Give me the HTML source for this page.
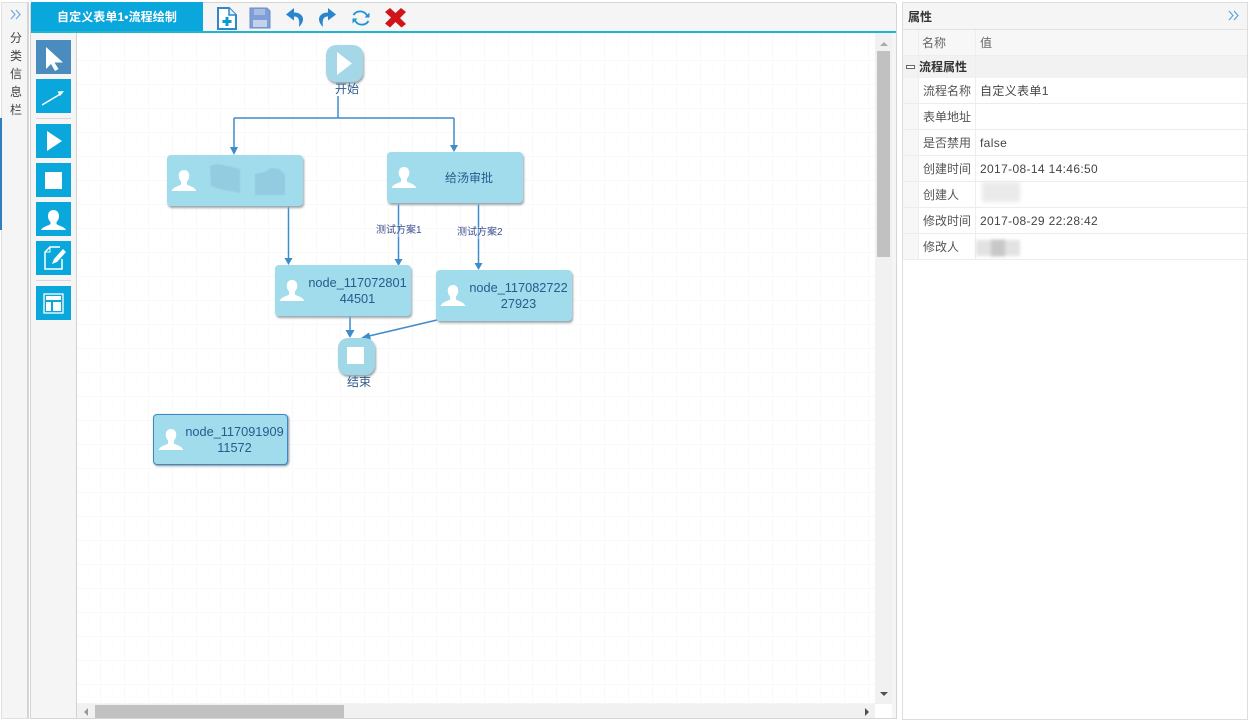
<!DOCTYPE html>
<html><head><meta charset="utf-8"><style>
html,body{margin:0;padding:0;background:#fff}
body{width:1250px;height:722px;overflow:hidden;position:relative;font-family:"Liberation Sans","Noto Sans CJK SC",sans-serif;font-size:12px;color:#333}
.a{position:absolute;box-sizing:border-box}
.btn{position:absolute;left:36px;width:35px;height:34px;background:#0aa7dc}
.btn svg{position:absolute;left:0;top:0}
.node{position:absolute;box-sizing:border-box;background:#a0dcec;border-radius:4px;box-shadow:1px 2px 2px #9aa6ac;color:#2a5a8c;font-size:12.75px;line-height:16px;text-align:center}
.node svg{position:absolute}
.node span{position:absolute;white-space:nowrap}
.row{position:absolute;left:903px;width:344px;height:26px;border-bottom:1px solid #ececec;box-sizing:border-box}
.row .k{position:absolute;left:20px;top:0;font-size:12px;line-height:27px;color:#555}
.row .v{position:absolute;left:77px;top:0;font-size:12px;line-height:27px;color:#444;letter-spacing:.35px}
.lab{position:absolute;font-size:10px;color:#3c4f8c;line-height:12px;white-space:nowrap}
</style></head><body>
<div class="a" style="left:1px;top:2px;width:28px;height:717px;background:#f5f5f5;border:1px solid #e0e0e0;border-right:2px solid #d4d4d4"></div>
<div class="a" style="left:0;top:118px;width:2px;height:112px;background:#2f7fc0"></div>
<svg class="a" style="left:10px;top:9px" width="12" height="12" fill="none" stroke="#6ea9dd" stroke-width="1.2"><path d="M1 1l4 4.500-4 4.500M6 1l4 4.500-4 4.500"/></svg>
<div class="a" style="left:9px;top:29px;width:14px;font-size:12px;line-height:18px;text-align:center;color:#444">分<br>类<br>信<br>息<br>栏</div>

<div class="a" style="left:30px;top:2px;width:867px;height:717px;background:#f5f5f5;border:1px solid #d5d5d5;border-radius:3px 3px 0 0"></div>
<div class="a" style="left:31px;top:2px;width:172px;height:29px;background:#0aa7dc;color:#fff;font-weight:bold;font-size:12px;line-height:30px;text-align:center;letter-spacing:.1px">自定义表单1•流程绘制</div>
<div class="a" style="left:31px;top:31px;width:865px;height:2px;background:#1fb3d4"></div>
<div class="a" style="left:76px;top:33px;width:1px;height:685px;background:#d6d0d0"></div>

<svg class="a" style="left:214px;top:5px" width="200" height="26">
<path d="M4 3h11l7 7v14H4z" fill="#fff" stroke="#2f86c8" stroke-width="2"/><path d="M15 3v7h7" fill="#dff0fa" stroke="#2f86c8" stroke-width="1.500"/><path d="M13 12v9M8.500 16.500h9" stroke="#0a9ad2" stroke-width="3"/>
<path d="M36 3h17l3 3v17H36z" fill="#7f9fd8" stroke="#6c8cc8"/><rect x="40" y="4" width="11" height="6" fill="#a8bce4"/><rect x="39" y="15" width="14" height="7" fill="#c4d2ee"/>
<path d="M80 3l-8 6.500 8 6v-4c4 0 6 2 5 10.500 4-4 5-8 3-11-2-2.500-4-3.500-8-3.500z" fill="#2a86cc"/>
<path d="M114 3l8 6.500-8 6v-4c-4 0-6 2-5 10.500-4-4-5-8-3-11 2-2.500 4-3.500 8-3.500z" fill="#2a86cc"/>
<path d="M139.500 10a7.800 7.800 0 0 1 13.500 .5M154.500 16a7.800 7.800 0 0 1-13.500-.5" fill="none" stroke="#1c94d2" stroke-width="1.800"/><path d="M155.500 7.500v5h-5zM138.500 18.500v-5h5z" fill="#1c94d2"/>
<path d="M171 7l5-4 5.500 5L187 3l5 4-6 6 6 6-4.500 3.500-6-5.500-5.500 5.500-5-4 6-6z" fill="#d0141a"/>
</svg>

<div class="btn" style="top:40px;background:#4a8cbe"><svg width="35" height="34"><path d="M10 7v22l5-5 4 7 3.500-2-4-6.500H27z" fill="#fff"/></svg></div>
<div class="btn" style="top:79px"><svg width="35" height="34"><path d="M6 26l20-12" stroke="#fff" stroke-width="1.500"/><path d="M28 12l-6.500 .5 2.500 4.500z" fill="#fff"/></svg></div>
<div class="a" style="left:36px;top:118px;width:35px;height:1px;background:#d8d8d8"></div>
<div class="btn" style="top:124px"><svg width="35" height="34"><path d="M11 7l15 10-15 10z" fill="#fff"/></svg></div>
<div class="btn" style="top:163px"><svg width="35" height="34"><rect x="9" y="9" width="17" height="17" fill="#fff"/></svg></div>
<div class="btn" style="top:202px"><svg width="35" height="34"><path d="M17.500 8c3.500 0 5.500 2.500 5.500 6 0 3-1.500 5-2.500 6v2c1 1.500 8 2.500 9.500 6H5c1.500-3.500 8.500-4.500 9.500-6v-2c-1-1-2.500-3-2.500-6 0-3.500 2-6 5.500-6z" fill="#fff"/></svg></div>
<div class="btn" style="top:241px"><svg width="35" height="34"><path d="M24 6H14L9 11v17h17V18" fill="none" stroke="#fff" stroke-width="1.500"/><path d="M14 6v5H9" fill="none" stroke="#fff" stroke-width="1"/><path d="M27 8l-9 10-2 5 5-2 9-10z" fill="#fff"/></svg></div>
<div class="a" style="left:36px;top:280px;width:35px;height:1px;background:#d8d8d8"></div>
<div class="btn" style="top:286px"><svg width="35" height="34"><rect x="8" y="8" width="19" height="19" fill="none" stroke="#fff" stroke-width="1.300"/><rect x="10" y="10" width="15" height="4" fill="#fff"/><rect x="10" y="16" width="5" height="9" fill="#fff"/><rect x="17" y="16" width="8" height="9" fill="#fff"/></svg></div>

<div class="a" style="left:77px;top:33px;width:798px;height:670px;background-color:#fff;background-image:linear-gradient(#f9f9f9 1px,transparent 1px),linear-gradient(90deg,#f9f9f9 1px,transparent 1px),linear-gradient(#fdfdfd 1px,transparent 1px),linear-gradient(90deg,#fdfdfd 1px,transparent 1px);background-size:24px 24px,24px 24px,12px 12px,12px 12px;background-position:-1px 3px"></div>

<div class="a" style="left:875px;top:33px;width:17px;height:671px;background:#f1f1f1"></div>
<div class="a" style="left:877px;top:51px;width:13px;height:206px;background:#c1c1c1"></div>
<svg class="a" style="left:879px;top:41px" width="10" height="6"><path d="M1 5l4-4 4 4z" fill="#aaa"/></svg>
<svg class="a" style="left:879px;top:691px" width="10" height="6"><path d="M1 1l4 4 4-4z" fill="#505050"/></svg>
<div class="a" style="left:77px;top:704px;width:798px;height:14px;background:#f1f1f1"></div>
<div class="a" style="left:875px;top:704px;width:17px;height:14px;background:#fff"></div>
<div class="a" style="left:95px;top:705px;width:249px;height:13px;background:#c1c1c1"></div>
<svg class="a" style="left:83px;top:707px" width="6" height="10"><path d="M5 1L1 5l4 4z" fill="#999"/></svg>
<svg class="a" style="left:864px;top:707px" width="6" height="10"><path d="M1 1l4 4-4 4z" fill="#505050"/></svg>

<svg class="a" style="left:0;top:0" width="900" height="500" fill="none" stroke="#3f8ccb" stroke-width="1.500">
<path d="M338 96v22M234 118h220M234 118v31M454 118v29M288.500 206v54M398.500 204v57M478.500 204v61M350 316v17M437 320l-68 16"/>
<g fill="#3f8ccb" stroke="none"><path d="M230 147h8l-4 8zM450 145h8l-4 7zM284.500 258h8l-4 7zM394.500 259h8l-4 7zM474.500 263h8l-4 7zM345.500 330h9l-4.500 8zM361 338l8-5.500 2 7z"/></g>
</svg>

<div class="a" style="left:326px;top:45px;width:37px;height:37px;border-radius:10px;background:#a4d8e8;box-shadow:1px 2px 2px #9aa4a8"></div>
<svg class="a" style="left:326px;top:45px" width="37" height="37"><path d="M11 7l15 11.500L11 30z" fill="#fff"/></svg>
<div class="a" style="left:326px;top:82px;width:42px;text-align:center;color:#2a5a8c;font-size:12px;line-height:14px">开始</div>

<div class="a" style="left:338px;top:338px;width:37px;height:37px;border-radius:10px;background:#a0d8e8;box-shadow:1px 2px 2px #9aa4a8"></div>
<div class="a" style="left:347px;top:347px;width:17px;height:17px;background:#fff"></div>
<div class="a" style="left:338px;top:375px;width:42px;text-align:center;color:#2a5a8c;font-size:12px;line-height:14px">结束</div>

<svg width="0" height="0" style="position:absolute"><defs><symbol id="u" viewBox="0 0 26 22"><path d="M13 0c3.500 0 5.500 2.500 5.500 6 0 3-1.500 5-2.500 6v3c1 1.500 8 2 10 7H0c2-5 9-5.500 10-7v-3c-1-1-2.500-3-2.500-6C7.500 2.500 9.500 0 13 0z" fill="#fff"/></symbol></defs></svg>

<div class="node" style="left:167px;top:155px;width:136px;height:51px">
<svg style="left:4px;top:15px" width="26" height="21"><use href="#u"/></svg>
<svg style="left:43px;top:9px;filter:blur(.6px)" width="76" height="32"><path d="M0 2l8-2 22 5v24l-20-4-9-3zM45 10l10-2 6-4 8 1 6 6v20H45z" fill="#93cbe0"/></svg>
</div>
<div class="node" style="left:387px;top:152px;width:136px;height:51px">
<svg style="left:4px;top:15px" width="26" height="21"><use href="#u"/></svg>
<span style="left:58px;top:18px;font-size:12px">给汤审批</span>
</div>
<div class="node" style="left:275px;top:265px;width:136px;height:51px">
<svg style="left:4px;top:15px" width="26" height="21"><use href="#u"/></svg>
<span style="left:33px;top:10px;width:99px">node_117072801<br>44501</span>
</div>
<div class="node" style="left:436px;top:270px;width:136px;height:51px">
<svg style="left:4px;top:15px" width="26" height="21"><use href="#u"/></svg>
<span style="left:33px;top:10px;width:99px">node_117082722<br>27923</span>
</div>
<div class="node" style="left:153px;top:414px;width:135px;height:51px;border:1px solid #3f86c4;box-shadow:1px 1px 2px #7a8a92">
<svg style="left:4px;top:14px" width="26" height="21"><use href="#u"/></svg>
<span style="left:31px;top:9px;width:99px">node_117091909<br>11572</span>
</div>

<div class="lab" style="left:376px;top:225px;background:rgba(255,255,255,.3)">测试方案1</div>
<div class="lab" style="left:457px;top:227px;background:rgba(255,255,255,.3)">测试方案2</div>

<div class="a" style="left:902px;top:2px;width:346px;height:718px;border:1px solid #ddd;background:#fff"></div>
<div class="a" style="left:903px;top:3px;width:344px;height:27px;background:#f5f5f5;border-bottom:1px solid #e2e2e2;font-weight:bold;font-size:12px;line-height:29px;padding-left:5px;color:#333">属性</div>
<svg class="a" style="left:1228px;top:10px" width="12" height="12" fill="none" stroke="#5aa4e0" stroke-width="1.200"><path d="M1 1l4 4.500-4 4.500M6 1l4 4.500-4 4.500"/></svg>
<div class="a" style="left:903px;top:30px;width:344px;height:26px;background:#f7f7f7;border-bottom:1px solid #eee"></div>
<div class="a" style="left:922px;top:30px;font-size:12px;line-height:26px;color:#666">名称</div>
<div class="a" style="left:980px;top:30px;font-size:12px;line-height:26px;color:#666">值</div>
<div class="a" style="left:903px;top:56px;width:344px;height:22px;background:#f2f2f2"></div>
<div class="a" style="left:906px;top:65px;width:9px;height:4px;border:1px solid #666;background:#fff"></div>
<div class="a" style="left:919px;top:56px;font-size:12px;font-weight:bold;line-height:22px;color:#333">流程属性</div>
<div class="a" style="left:903px;top:78px;width:15px;height:182px;background:#f7f7f7"></div>
<div class="row" style="top:78px"><span class="k">流程名称</span><span class="v">自定义表单1</span></div>
<div class="row" style="top:104px"><span class="k">表单地址</span></div>
<div class="row" style="top:130px"><span class="k">是否禁用</span><span class="v">false</span></div>
<div class="row" style="top:156px"><span class="k">创建时间</span><span class="v">2017-08-14 14:46:50</span></div>
<div class="row" style="top:182px"><span class="k">创建人</span></div>
<div class="row" style="top:208px"><span class="k">修改时间</span><span class="v">2017-08-29 22:28:42</span></div>
<div class="row" style="top:234px"><span class="k">修改人</span></div>
<div class="a" style="left:918px;top:30px;width:1px;height:230px;background:#eee"></div>
<div class="a" style="left:975px;top:30px;width:1px;height:230px;background:#eee"></div>
<div class="a" style="left:982px;top:182px;width:38px;height:20px;background:#eaeaea;filter:blur(2px)"></div>
<div class="a" style="left:976px;top:240px;width:44px;height:16px;background:#e2e2e2;filter:blur(1.500px)"></div>
<div class="a" style="left:991px;top:240px;width:14px;height:16px;background:#c8c8c8;filter:blur(1.500px)"></div>
</body></html>
